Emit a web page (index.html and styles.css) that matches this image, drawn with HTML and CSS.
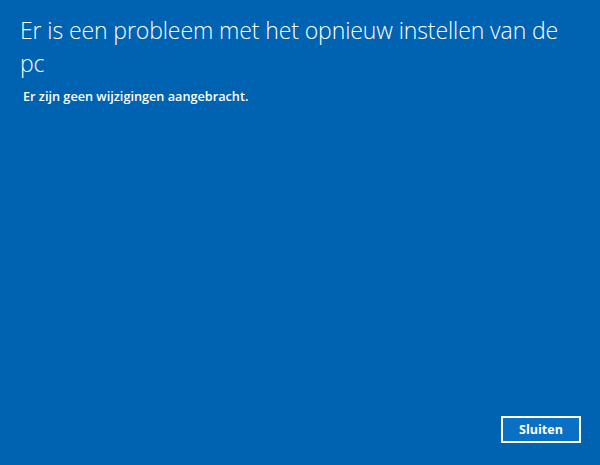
FILE: index.html
```html
<!DOCTYPE html>
<html lang="nl">
<head>
    <meta charset="UTF-8">
    <meta name="viewport" content="width=device-width, initial-scale=1.0">
    <title>PC opnieuw instellen</title>
    <link rel="stylesheet" href="styles.css">
</head>
<body>

    <div class="dialog">
        <div class="content">
            <h1>Er is een probleem met het opnieuw instellen van de pc</h1>
            <p class="message">Er zijn geen wijzigingen aangebracht.</p>
        </div>

        <!-- Close button -->
        <div class="actions">
            <button type="button">Sluiten</button>
        </div>
    </div>

</body>
</html>
```
FILE: styles.css
```css
html, body {
    height: 100%;
}
body {
    margin: 0;
    background-color: #0063b1;
    color: #fff;
    font-family: "Open Sans", "Noto Sans", Arial, sans-serif;
}
.dialog {
    height: 100%;
    box-sizing: border-box;
    display: flex;
    flex-direction: column;
    justify-content: space-between;
    padding: 14px 19px 22px 20px;
}
h1 {
    margin: 0;
    font-size: 23px;
    font-weight: 300;
    line-height: 33px;
    letter-spacing: -0.1px;
    max-width: 545px;
}
.message {
    margin: 7px 0 0 3px;
    font-size: 12.7px;
    font-weight: 600;
}
.actions {
    display: flex;
    justify-content: flex-end;
}
button {
    width: 80px;
    height: 27px;
    background-color: #0a70c4;
    color: #fff;
    border: 2px solid #fff;
    font-family: "Open Sans", Arial, sans-serif;
    font-size: 12.5px;
    font-weight: 700;
    cursor: pointer;
}
```
